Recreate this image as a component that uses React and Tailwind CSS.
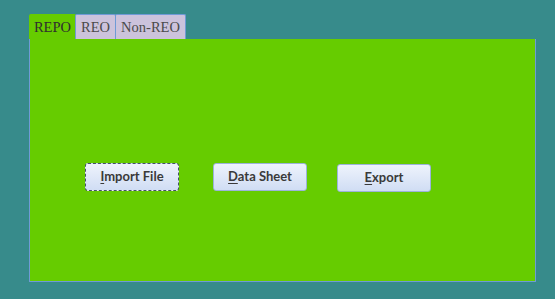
import { useState } from "react";

const tabs = [
  { label: "REPO", w: "w-[47px]" },
  { label: "REO", w: "w-[41px]" },
  { label: "Non-REO", w: "w-[71px]" },
];

function Btn({ access, rest, focused, className = "" }) {
  return (
    <button
      className={
        "h-[28px] w-[94px] rounded-[3px] border text-[13px] font-bold text-[#3a3a3a] bg-gradient-to-b from-[#eef3fc] to-[#d0ddf4] " +
        (focused ? "border-dashed border-[#44506a] " : "border-[#9db3dc] ") +
        className
      }
      style={{ fontFamily: "Lato, 'Open Sans', sans-serif" }}
    >
      <span className="underline underline-offset-2">{access}</span>
      {rest}
    </button>
  );
}

export default function App() {
  const [active, setActive] = useState(0);

  return (
    <div className="w-[555px] h-[299px] bg-[#378b8b] pl-[29px] pt-[14px]">
      {/* Tabs */}
      <div className="flex h-[25px] items-end">
        {tabs.map((t, i) => (
          <button
            key={t.label}
            onClick={() => setActive(i)}
            className={
              "h-[25px] pt-[2px] border border-b-0 border-[#6f9ad6] rounded-t-[2px] text-[14.5px] text-center " +
              t.w +
              (i === active
                ? " bg-[#66cc00] text-[#2f2f2f] border-[#66cc00]"
                : " bg-[#ccc3dc] text-[#4a4a4a] ml-[-1px]")
            }
            style={{ fontFamily: "'Liberation Serif', serif" }}
          >
            {t.label}
          </button>
        ))}
      </div>

      {/* Panel */}
      <div className="w-[507px] h-[243px] bg-[#66cc00] border border-[#6f9ad6] border-t-0 pt-[124px] pl-[55px]">
        <div className="flex items-start">
          <Btn access="I" rest="mport File" focused />
          <Btn access="D" rest="ata Sheet" className="ml-[34px]" />
          <Btn access="E" rest="xport" className="ml-[30px] mt-[1px]" />
        </div>
      </div>
    </div>
  );
}
